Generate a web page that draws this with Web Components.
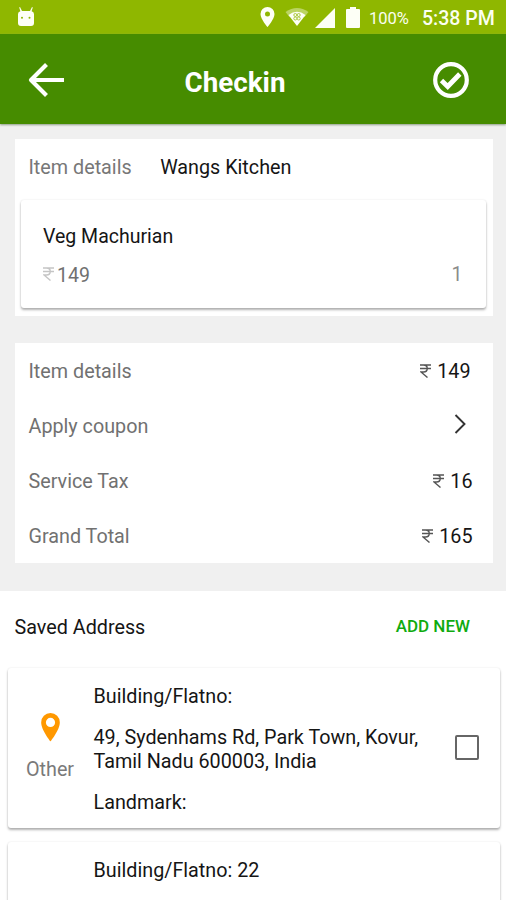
<!DOCTYPE html>
<html lang="en">
<head>
<meta charset="utf-8">
<title>Checkin</title>
<style>
html,body{margin:0;height:900px;overflow:hidden;background:#fff}
body{font:19.75px/23.5px Roboto,"Noto Sans",sans-serif;color:#151515}
</style>
</head>
<body>
<checkin-page></checkin-page>
<script>
const define = (name, html) => {
  const t = document.createElement('template');
  t.innerHTML = html;
  customElements.define(name, class extends HTMLElement {
    constructor() {
      super();
      this.attachShadow({ mode: 'open' }).append(t.content.cloneNode(true));
    }
  });
};

define('status-bar', `<style>
:host{display:flex;align-items:center;height:34px;background:#8fb700;color:#fbfff0;padding:0 11px 0 16px;box-sizing:border-box}
svg{display:block;fill:#fdfff6;flex:none}
.space{flex:1}.pct{font-size:16.5px;margin:3px 13px 0 9px;width:40px;white-space:nowrap}
.time{font-size:19.5px;font-weight:500;width:73px;margin-top:4px;white-space:nowrap}
</style>
<svg width="20" height="22" viewBox="0 0 20 22"><path d="M4 1l2 4h8l2-4 .8.4L15.6 5.2Q18 6 18 8v9q0 3-3 3H5q-3 0-3-3V8q0-2 2.4-2.8L3.2 1.4z"/><circle cx="6" cy="11.7" r="1" fill="#8fb700"/><circle cx="13.5" cy="11.7" r="1" fill="#8fb700"/></svg>
<span class="space"></span>
<svg width="15" height="20" viewBox="0 0 15 20" style="margin-right:10px"><path fill-rule="evenodd" d="M7.5 0A7 7 0 0 0 .5 7c0 5 7 13 7 13s7-8 7-13a7 7 0 0 0-7-7zm0 4.6a2.5 2.5 0 1 1 0 5 2.5 2.5 0 0 1 0-5z"/></svg>
<svg width="24" height="20" viewBox="0 0 24 20" style="margin-right:6px"><path opacity=".4" d="M.5 5Q12-3 23.500 5l-4 5H4.500z"/><path d="M3.500 8Q12 1.500 20.500 8L12 19z"/><g fill="none" stroke="#8fb700" stroke-width=".9" opacity=".8"><circle cx="10.300" cy="8" r="1.500"/><circle cx="13.700" cy="8" r="1.500"/><circle cx="10.300" cy="11.500" r="1.500"/><circle cx="13.700" cy="11.500" r="1.500"/></g></svg>
<svg width="20" height="20" viewBox="0 0 20 20" style="margin:2px 11px 0 0"><path d="M0 20L20 0v20z"/></svg>
<svg width="14" height="21" viewBox="0 0 14 21"><path d="M1 2h3V0h6v2h3q1 0 1 1v17q0 1-1 1H1q-1 0-1-1V3q0-1 1-1z"/></svg>
<span class="pct">100%</span><span class="time">5:38 PM</span>`);

define('app-bar', `<style>
:host{display:grid;grid-template-columns:60px 1fr 74px;align-items:center;height:89.5px;background:#468c00;color:#fff;padding:0 20px 0 16px;box-sizing:border-box;box-shadow:0 1px 2px #8d9d85;position:relative}
svg{display:block;fill:none;stroke:#fff;stroke-width:4.2}
h1{margin:0;text-align:center;font-size:27.8px;line-height:34px;font-weight:700;padding:9px 18px 0 0}
.back{margin-left:12px}.ok{margin-left:20px}
</style>
<svg class="back" width="38" height="38" viewBox="0 0 38 38"><path d="M18.5 4.500L3 20l15.500 15.500M3 20H36" stroke-linejoin="round"/></svg>
<h1><slot></slot></h1>
<svg class="ok" width="38" height="38" viewBox="0 0 38 38"><circle cx="19" cy="20" r="15.8"/><path d="M9.500 20.500l6.200 6L27.800 14" stroke-width="4.8"/></svg>`);

define('white-panel', `<style>:host{display:block;background:#fff;margin:0 13.5px 0 14.5px}</style><slot></slot>`);

define('shadow-card', `<style>:host{display:block;background:#fff;border-radius:3px;box-shadow:0 2px 2.5px rgba(0,0,0,.3),0 0 2px rgba(0,0,0,.1)}</style><slot></slot>`);

define('rupee-amount', `<style>:host{display:inline-flex;align-items:center;gap:var(--gap,6px);color:var(--amount,#151515)}
svg{width:11px;height:14px;fill:none;stroke:var(--sign,#555);stroke-width:1.4;flex:none;margin-top:-2px}</style>
<svg viewBox="0 0 11 14"><path d="M0 1h11M0 4.500h11M1 1h2.500c5 0 5 7 0 7H1l6.500 5.500"/></svg><span><slot></slot></span>`);

define('order-item', `<style>
:host{display:block;padding:25px 23px 22px 22px;font-size:19.5px}
.row{display:flex;justify-content:space-between;margin-top:15.5px}
rupee-amount{--gap:3px;--sign:#c5c5c5;--amount:#707070}
.qty{color:#8b8b8b;margin-top:-1px}
</style><div><slot name="name"></slot></div>
<div class="row"><rupee-amount><slot name="price"></slot></rupee-amount><span class="qty"><slot name="qty"></slot></span></div>`);

define('bill-row', `<style>
:host{display:flex;align-items:center;justify-content:space-between;height:54.9px;padding:3.5px var(--end,20px) 0 14px;box-sizing:border-box}
.label{color:#717171}
</style><span class="label"><slot name="label"></slot></span><slot></slot>`);

define('chevron-icon', `<style>:host{display:block;padding-right:6.5px;margin-top:-6px}svg{display:block;fill:none;stroke:#333;stroke-width:1.9}</style>
<svg width="12" height="20" viewBox="0 0 12 20"><path d="M1.500 1L10.500 10l-9 9"/></svg>`);

define('section-head', `<style>
:host{display:flex;flex:none;align-items:center;justify-content:space-between;height:77px;padding:0 36px 3.5px 14.5px;box-sizing:border-box}
.action{font-size:17px;font-weight:500;color:#10ab10;margin-top:-2px}
</style><span><slot></slot></span><span class="action"><slot name="action"></slot></span>`);

define('address-card', `<style>
:host{display:grid;grid-template-columns:85.5px 1fr 45.500px;min-height:160px;padding-top:17.5px;box-sizing:border-box}
.kind{display:flex;flex-direction:column;align-items:center;color:#7a7a7a;padding-top:28px;gap:15.5px;width:84px}
.kind svg{display:block}
.lines{display:flex;flex-direction:column;gap:17.5px;white-space:nowrap}
.box{width:20.6px;height:20.6px;border:2.2px solid #666;border-radius:2px;margin-top:50px}
:host([tall]) .kind{padding-top:60px}
:host([tall]) .box{margin-top:80px}
</style>
<div class="kind"><svg width="19" height="29" viewBox="0 0 19 29"><path fill="#ff9800" fill-rule="evenodd" d="M9.500 0A9.300 9.300 0 0 0 .2 9.500C.2 17 9.500 28.500 9.500 28.500S18.800 17 18.800 9.500A9.300 9.300 0 0 0 9.500 0zm0 4.800a4.600 4.600 0 1 1 0 9.200 4.600 4.600 0 0 1 0-9.200z"/></svg><slot name="kind"></slot></div>
<div class="lines"><slot></slot></div><div class="box"></div>`);

define('checkin-page', `<style>
:host{display:flex;flex-direction:column;height:900px;overflow:hidden}
status-bar,app-bar,.list{flex:none}
main{background:#f0f0f0;display:flex;flex-direction:column;gap:27.5px;padding:15px 0 28px;flex:none}
.first{height:177px;display:flow-root}
.head{display:flex;gap:28.5px;padding:17px 14px 0}
.head span:first-child{color:#777}
.item{margin:20.5px 7px 0 6.5px;height:108px}
.list{display:flex;flex-direction:column;gap:14px;padding:0 6px 0 8px}
</style>
<status-bar></status-bar>
<app-bar>Checkin</app-bar>
<main>
<white-panel class="first">
 <div class="head"><span>Item details</span><span>Wangs Kitchen</span></div>
 <shadow-card class="item"><order-item><span slot="name">Veg Machurian</span><span slot="price">149</span><span slot="qty">1</span></order-item></shadow-card>
</white-panel>
<white-panel>
 <bill-row style="--end:22px"><span slot="label">Item details</span><rupee-amount>149</rupee-amount></bill-row>
 <bill-row><span slot="label">Apply coupon</span><chevron-icon></chevron-icon></bill-row>
 <bill-row><span slot="label">Service Tax</span><rupee-amount>16</rupee-amount></bill-row>
 <bill-row><span slot="label">Grand Total</span><rupee-amount>165</rupee-amount></bill-row>
</white-panel>
</main>
<section-head>Saved Address<span slot="action">ADD NEW</span></section-head>
<div class="list">
 <shadow-card><address-card><span slot="kind">Other</span><span>Building/Flatno:</span><span>49, Sydenhams Rd, Park Town, Kovur,<br>Tamil Nadu 600003, India</span><span>Landmark:</span></address-card></shadow-card>
 <shadow-card><address-card tall><span>Building/Flatno: 22</span></address-card></shadow-card>
</div>`);
</script>
</body>
</html>
